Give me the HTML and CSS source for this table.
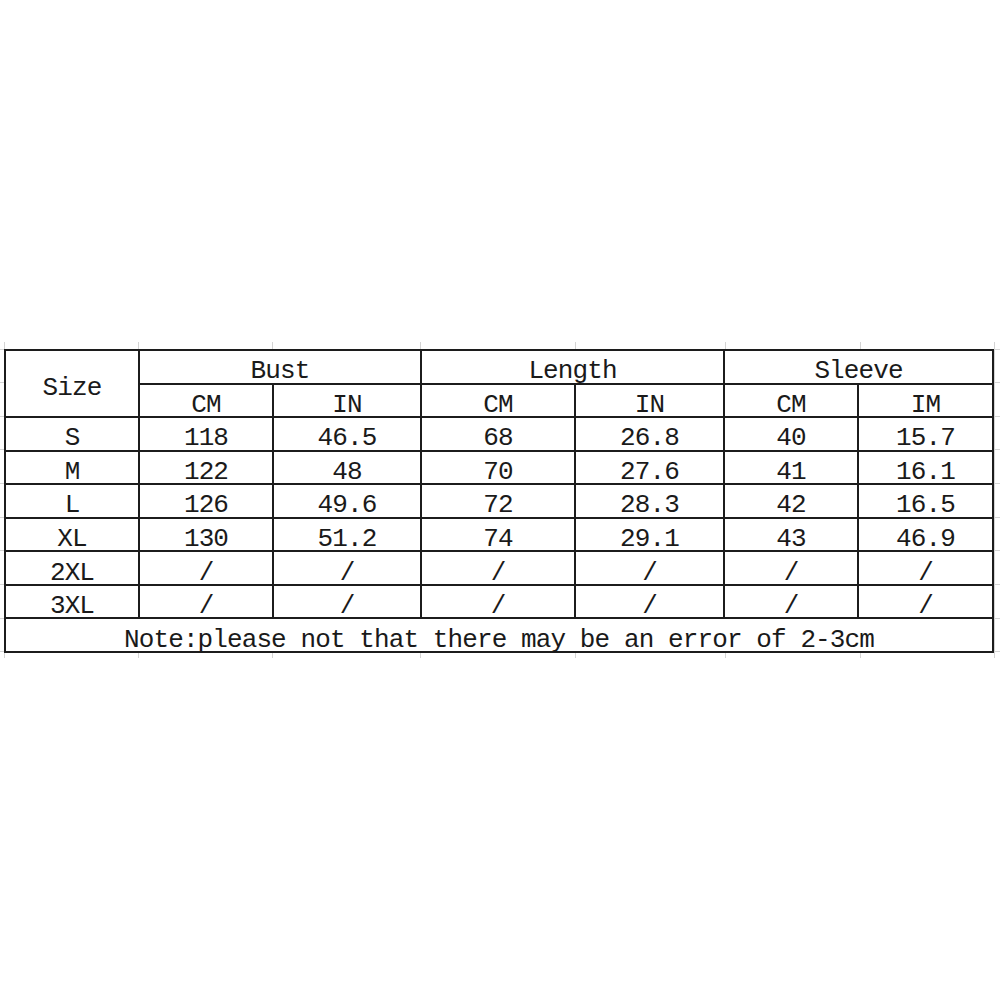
FILE: index.html
```html
<!DOCTYPE html>
<html lang="en">
<head>
<meta charset="utf-8">
<title>Size chart</title>
<link rel="stylesheet" href="styles.css">
</head>
<body>
<div class="sheet">
  <div class="size-table">
    <div class="cell size-head">Size</div>
    <div class="cell group">Bust</div>
    <div class="cell group">Length</div>
    <div class="cell group">Sleeve</div>

    <div class="cell">CM</div>
    <div class="cell">IN</div>
    <div class="cell">CM</div>
    <div class="cell">IN</div>
    <div class="cell">CM</div>
    <div class="cell">IM</div>

    <div class="cell">S</div>
    <div class="cell">118</div>
    <div class="cell">46.5</div>
    <div class="cell">68</div>
    <div class="cell">26.8</div>
    <div class="cell">40</div>
    <div class="cell">15.7</div>

    <div class="cell">M</div>
    <div class="cell">122</div>
    <div class="cell">48</div>
    <div class="cell">70</div>
    <div class="cell">27.6</div>
    <div class="cell">41</div>
    <div class="cell">16.1</div>

    <div class="cell">L</div>
    <div class="cell">126</div>
    <div class="cell">49.6</div>
    <div class="cell">72</div>
    <div class="cell">28.3</div>
    <div class="cell">42</div>
    <div class="cell">16.5</div>

    <div class="cell">XL</div>
    <div class="cell">130</div>
    <div class="cell">51.2</div>
    <div class="cell">74</div>
    <div class="cell">29.1</div>
    <div class="cell">43</div>
    <div class="cell">46.9</div>

    <div class="cell">2XL</div>
    <div class="cell">/</div>
    <div class="cell">/</div>
    <div class="cell">/</div>
    <div class="cell">/</div>
    <div class="cell">/</div>
    <div class="cell">/</div>

    <div class="cell">3XL</div>
    <div class="cell">/</div>
    <div class="cell">/</div>
    <div class="cell">/</div>
    <div class="cell">/</div>
    <div class="cell">/</div>
    <div class="cell">/</div>

    <div class="cell note">Note:please not that there may be an error of 2-3cm</div>
  </div>
</div>
</body>
</html>
```

FILE: styles.css
```css
html, body {
  margin: 0;
  padding: 0;
  background: #ffffff;
}

.sheet {
  margin-top: 342px;
  padding: 7px 6px 5px 4px;
  background-image:
    linear-gradient(to right,
      transparent 4px, #d4d4d4 4px, #d4d4d4 5px, transparent 5px,
      transparent 138px, #d4d4d4 138px, #d4d4d4 139px, transparent 139px,
      transparent 272px, #d4d4d4 272px, #d4d4d4 273px, transparent 273px,
      transparent 420px, #d4d4d4 420px, #d4d4d4 421px, transparent 421px,
      transparent 575px, #d4d4d4 575px, #d4d4d4 576px, transparent 576px,
      transparent 725px, #d4d4d4 725px, #d4d4d4 726px, transparent 726px,
      transparent 860px, #d4d4d4 860px, #d4d4d4 861px, transparent 861px,
      transparent 994px, #d4d4d4 994px, #d4d4d4 995px, transparent 995px),
    linear-gradient(to bottom,
      transparent 7px, #d4d4d4 7px, #d4d4d4 8px, transparent 8px,
      transparent 40px, #d4d4d4 40px, #d4d4d4 41px, transparent 41px,
      transparent 74px, #d4d4d4 74px, #d4d4d4 75px, transparent 75px,
      transparent 107px, #d4d4d4 107px, #d4d4d4 108px, transparent 108px,
      transparent 141px, #d4d4d4 141px, #d4d4d4 142px, transparent 142px,
      transparent 175px, #d4d4d4 175px, #d4d4d4 176px, transparent 176px,
      transparent 208px, #d4d4d4 208px, #d4d4d4 209px, transparent 209px,
      transparent 242px, #d4d4d4 242px, #d4d4d4 243px, transparent 243px,
      transparent 276px, #d4d4d4 276px, #d4d4d4 277px, transparent 277px,
      transparent 309px, #d4d4d4 309px, #d4d4d4 310px, transparent 310px);
}

.size-table {
  display: grid;
  grid-template-columns: 132px 132px 146px 152px 147px 132px 133px;
  grid-template-rows: repeat(9, minmax(0, 1fr));
  gap: 2px;
  padding: 2px;
  width: 990px;
  height: 304px;
  box-sizing: border-box;
  background: #1c1c1c;
}

.cell {
  background: #ffffff;
  display: flex;
  align-items: center;
  justify-content: center;
  min-height: 0;
  overflow: visible;
  padding-top: 9px;
  box-sizing: border-box;
  font-family: "Liberation Mono", "DejaVu Sans Mono", monospace;
  font-size: 26px;
  letter-spacing: -0.9px;
  line-height: 20px;
  color: #1a1a1a;
  white-space: nowrap;
}

.size-head {
  grid-row: span 2;
}

.group {
  grid-column: span 2;
}

.note {
  grid-column: 1 / -1;
}
```
